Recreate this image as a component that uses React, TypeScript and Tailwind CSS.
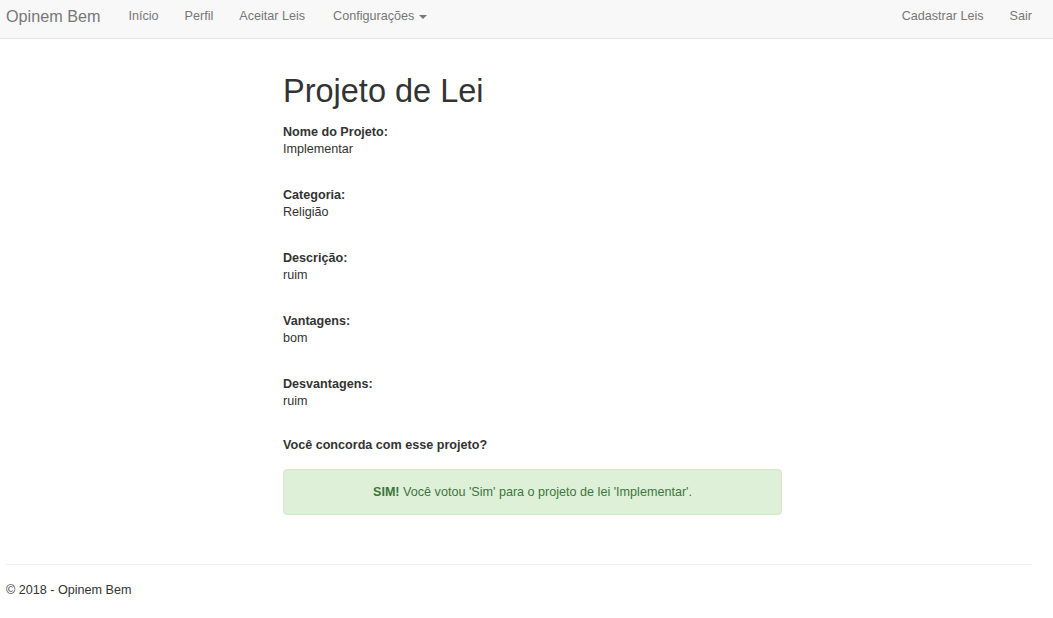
const fields = [
  { label: "Nome do Projeto:", value: "Implementar" },
  { label: "Categoria:", value: "Religião" },
  { label: "Descrição:", value: "ruim" },
  { label: "Vantagens:", value: "bom" },
  { label: "Desvantagens:", value: "ruim" },
];

const leftLinks = ["Início", "Perfil", "Aceitar Leis"];

export default function App() {
  return (
    <div className="min-h-screen bg-white text-[12.6px] text-[#333] [font-family:'Liberation_Sans',Arial,sans-serif]">
      <nav className="flex h-[39px] items-start justify-between border-b border-[#e7e7e7] bg-[#f8f8f8] pt-[7px] text-[#777]">
        <div className="flex items-center">
          <a className="pl-[6px] pr-[15px] text-[16.2px] leading-[19px]">Opinem Bem</a>
          {leftLinks.map((l) => (
            <a key={l} className="px-[13px] leading-[19px]">
              {l}
            </a>
          ))}
          <a className="flex items-center pl-[15px] pr-[13px] leading-[19px]">
            Configurações
            <span className="ml-[5px] inline-block h-0 w-0 border-x-[4px] border-t-[4px] border-x-transparent border-t-[#777]" />
          </a>
        </div>
        <div className="flex items-center pr-[21px]">
          <a className="px-[13px] leading-[19px]">Cadastrar Leis</a>
          <a className="pl-[13px] leading-[19px]">Sair</a>
        </div>
      </nav>

      <main className="ml-[283px] w-[499px] pt-[32px]">
        <h1 className="text-[32.5px] leading-[40px] font-normal">Projeto de Lei</h1>
        <div className="mt-[13px] flex flex-col gap-[29px]">
          {fields.map((f) => (
            <div key={f.label} className="leading-[17px]">
              <div className="font-bold">{f.label}</div>
              <div>{f.value}</div>
            </div>
          ))}
        </div>
        <div className="mt-[27px] leading-[17px] font-bold">Você concorda com esse projeto?</div>
        <div className="mt-[15px] flex h-[46px] items-center justify-center rounded border border-[#d6e9c6] bg-[#dff0d8] text-[#3c763d]">
          <span>
            <strong>SIM!</strong> Você votou 'Sim' para o projeto de lei 'Implementar'.
          </span>
        </div>
      </main>

      <footer className="ml-[6px] mr-[21px] mt-[49px]">
        <hr className="border-t border-[#eee]" />
        <p className="mt-[17px] leading-[17px]">© 2018 - Opinem Bem</p>
      </footer>
    </div>
  );
}
